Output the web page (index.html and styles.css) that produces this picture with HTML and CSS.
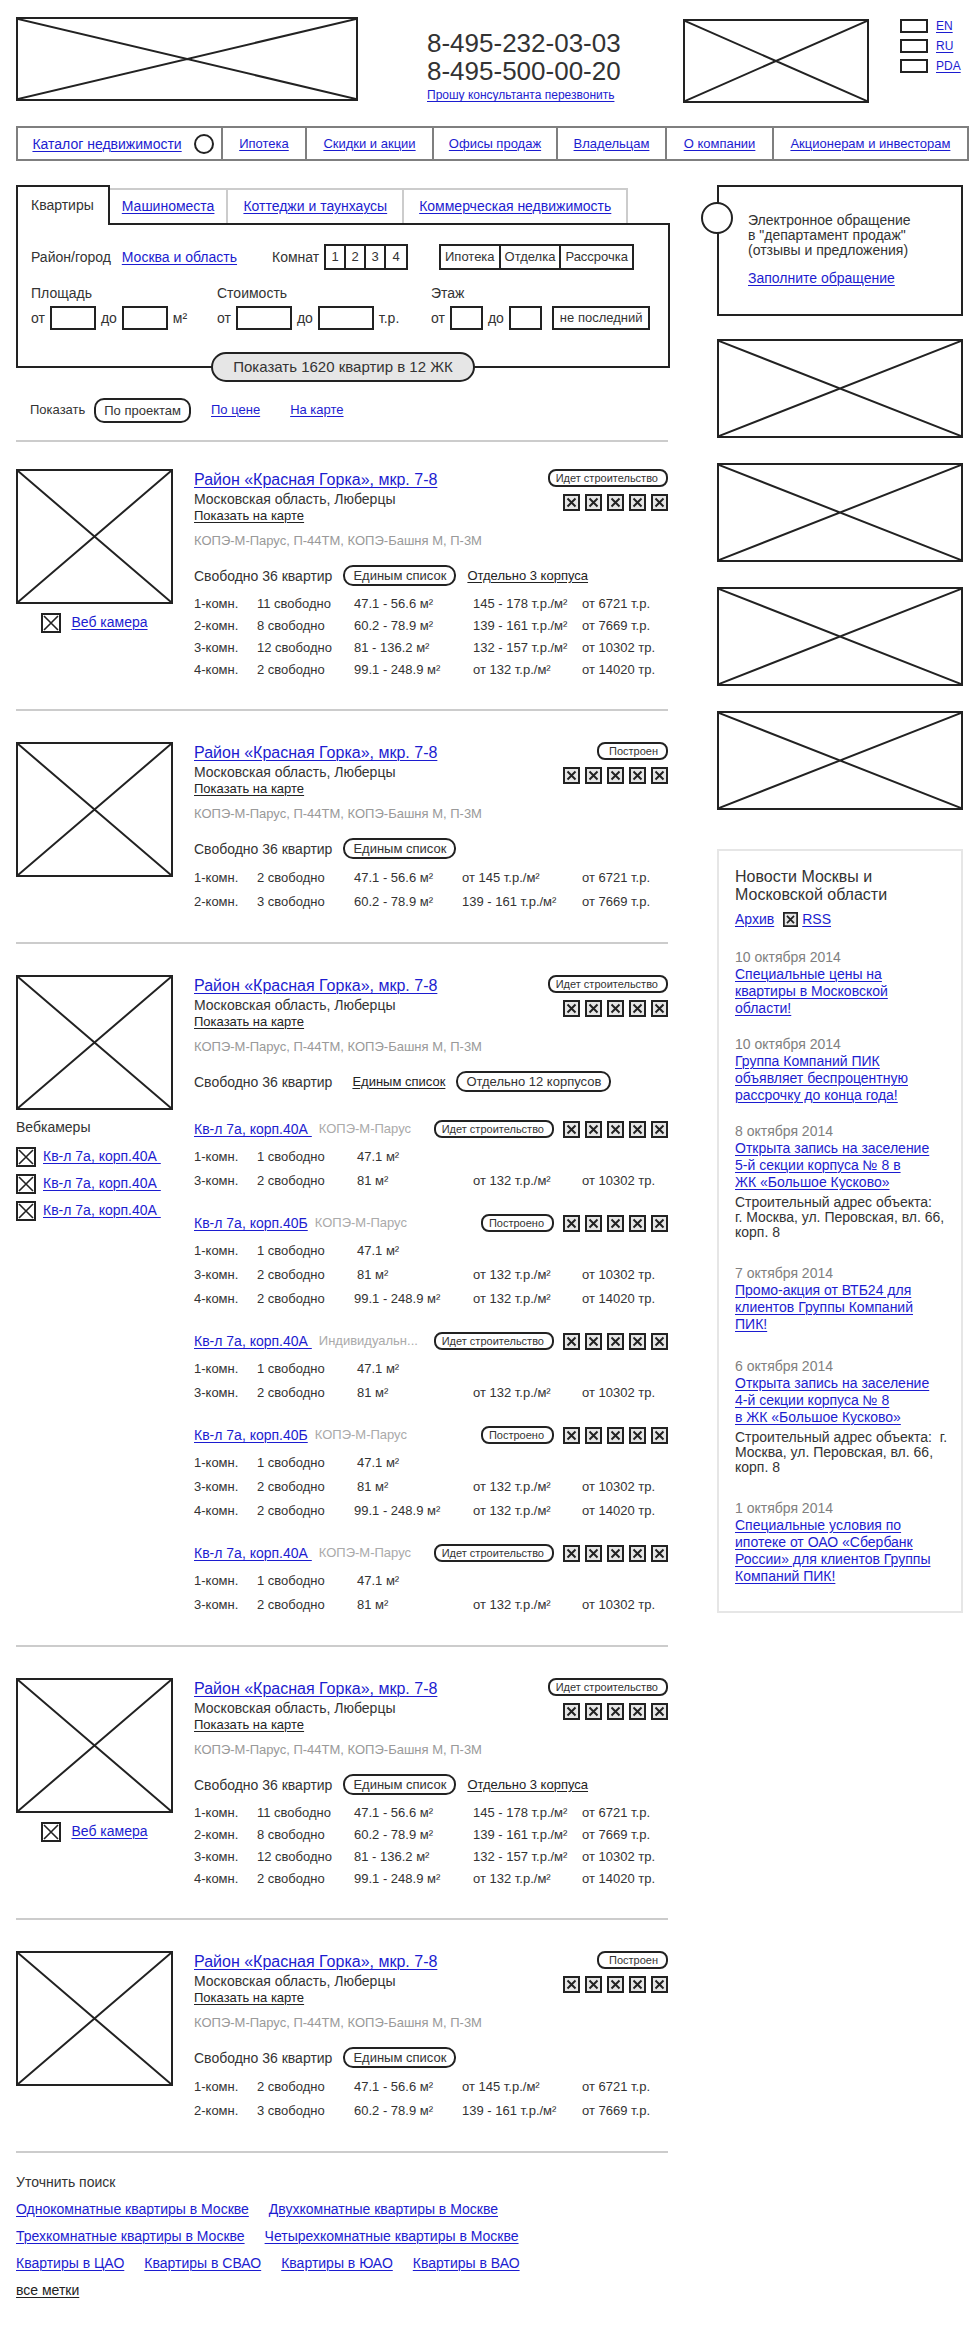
FILE: index.html
```html
<!DOCTYPE html>
<html lang="ru">
<head>
<meta charset="utf-8">
<meta name="viewport" content="width=device-width, initial-scale=1">
<title>Каталог недвижимости</title>
<link rel="stylesheet" href="styles.css">
</head>
<body>
<svg class="defs" aria-hidden="true">
  <symbol id="cross" viewBox="0 0 100 100" preserveAspectRatio="none"><path d="M0 0L100 100M100 0L0 100" vector-effect="non-scaling-stroke"/></symbol>
  <symbol id="mark" viewBox="0 0 17 17"><rect x="1" y="1" width="15" height="15" fill="#e6e6e6"/><path d="M4.500 4.500L12.500 12.500M12.500 4.500L4.500 12.500"/></symbol>
  <symbol id="cam" viewBox="0 0 20 20"><rect x="1" y="1" width="18" height="18" fill="#fff"/><path d="M3 3L17 17M17 3L3 17" stroke-width="1.600"/></symbol>
</svg>

<header class="header">
  <div class="ph ph-logo"><svg><use href="#cross"/></svg></div>
  <div class="phones">
    <div class="phone">8-495-232-03-03</div>
    <div class="phone">8-495-500-00-20</div>
    <a class="callback" href="#">Прошу консультанта перезвонить</a>
  </div>
  <div class="ph ph-promo"><svg><use href="#cross"/></svg></div>
  <ul class="langs">
    <li><span class="flag"></span><a href="#">EN</a></li>
    <li><span class="flag"></span><a href="#">RU</a></li>
    <li><span class="flag"></span><a href="#">PDA</a></li>
  </ul>
</header>

<nav class="nav">
  <div class="nav-item nav-main"><a href="#">Каталог недвижимости</a><span class="dot"></span></div>
  <div class="nav-item"><a href="#">Ипотека</a></div>
  <div class="nav-item"><a href="#">Скидки и акции</a></div>
  <div class="nav-item"><a href="#">Офисы продаж</a></div>
  <div class="nav-item"><a href="#">Владельцам</a></div>
  <div class="nav-item"><a href="#">О компании</a></div>
  <div class="nav-item"><a href="#">Акционерам и инвесторам</a></div>
</nav>

<div class="columns">
<main>
  <div class="tabs">
    <span class="tab tab-active">Квартиры</span>
    <span class="tab"><a href="#">Машиноместа</a></span>
    <span class="tab"><a href="#">Коттеджи и таунхаусы</a></span>
    <span class="tab"><a href="#">Коммерческая недвижимость</a></span>
  </div>
  <form class="search">
    <div class="search-row">
      <span class="region">Район/город <a href="#">Москва и область</a></span>
      <span class="rooms">Комнат
        <span class="group group-rooms"><button type="button">1</button><button type="button">2</button><button type="button">3</button><button type="button">4</button></span>
      </span>
      <span class="group group-options"><button type="button">Ипотека</button><button type="button">Отделка</button><button type="button">Рассрочка</button></span>
    </div>
    <div class="ranges">
      <div>
        <div class="range-title">Площадь</div>
        <div class="range"><label for="a1">от</label><input id="a1" class="w-area" type="text"><label for="a2">до</label><input id="a2" class="w-area" type="text"><span>м²</span></div>
      </div>
      <div>
        <div class="range-title">Стоимость</div>
        <div class="range"><label for="c1">от</label><input id="c1" class="w-cost" type="text"><label for="c2">до</label><input id="c2" class="w-cost" type="text"><span>т.р.</span></div>
      </div>
      <div>
        <div class="range-title">Этаж</div>
        <div class="range"><label for="f1">от</label><input id="f1" class="w-floor" type="text"><label for="f2">до</label><input id="f2" class="w-floor" type="text"><button class="not-last" type="button">не последний</button></div>
      </div>
    </div>
    <button class="submit" type="submit">Показать 1620 квартир в 12 ЖК</button>
  </form>

  <div class="sort"><span>Показать</span><button class="pill" type="button">По проектам</button><a href="#">По цене</a><a href="#">На карте</a></div>

  <article class="listing">
    <div class="side">
      <div class="ph ph-photo"><svg><use href="#cross"/></svg></div>
      <div class="webcam"><svg class="cam"><use href="#cam"/></svg><a href="#">Веб камера</a></div>
    </div>
    <div class="info">
      <div class="top">
        <div>
          <h2><a href="#">Район «Красная Горка», мкр. 7-8</a></h2>
          <div class="address">Московская область, Люберцы</div>
          <a class="map-link" href="#">Показать на карте</a>
        </div>
        <div class="status"><span class="badge">Идет строительство</span>
          <span class="marks"><svg><use href="#mark"/></svg><svg><use href="#mark"/></svg><svg><use href="#mark"/></svg><svg><use href="#mark"/></svg><svg><use href="#mark"/></svg></span></div>
      </div>
      <div class="series">КОПЭ-М-Парус, П-44ТМ, КОПЭ-Башня М, П-3М</div>
      <div class="free"><span>Свободно 36 квартир</span><button class="pill" type="button">Единым список</button><a class="dark" href="#">Отдельно 3 корпуса</a></div>
      <table class="flats">
        <colgroup><col class="c1"><col class="c2"><col class="c3"><col class="c4"><col></colgroup>
        <tr><td>1-комн.</td><td>11 свободно</td><td>47.1 - 56.6 м²</td><td>145 - 178 т.р./м²</td><td>от 6721 т.р.</td></tr>
        <tr><td>2-комн.</td><td>8 свободно</td><td>60.2 - 78.9 м²</td><td>139 - 161 т.р./м²</td><td>от 7669 т.р.</td></tr>
        <tr><td>3-комн.</td><td>12 свободно</td><td>81 - 136.2 м²</td><td>132 - 157 т.р./м²</td><td>от 10302 тр.</td></tr>
        <tr><td>4-комн.</td><td>2 свободно</td><td>99.1 - 248.9 м²</td><td>от 132 т.р./м²</td><td>от 14020 тр.</td></tr>
      </table>
    </div>
  </article>

  <article class="listing">
    <div class="side"><div class="ph ph-photo"><svg><use href="#cross"/></svg></div></div>
    <div class="info">
      <div class="top">
        <div>
          <h2><a href="#">Район «Красная Горка», мкр. 7-8</a></h2>
          <div class="address">Московская область, Люберцы</div>
          <a class="map-link" href="#">Показать на карте</a>
        </div>
        <div class="status"><span class="badge badge-built">Построен</span>
          <span class="marks"><svg><use href="#mark"/></svg><svg><use href="#mark"/></svg><svg><use href="#mark"/></svg><svg><use href="#mark"/></svg><svg><use href="#mark"/></svg></span></div>
      </div>
      <div class="series">КОПЭ-М-Парус, П-44ТМ, КОПЭ-Башня М, П-3М</div>
      <div class="free"><span>Свободно 36 квартир</span><button class="pill" type="button">Единым список</button></div>
      <table class="flats flats-short">
        <colgroup><col class="c1"><col class="c2"><col class="c3"><col class="c4"><col></colgroup>
        <tr><td>1-комн.</td><td>2 свободно</td><td>47.1 - 56.6 м²</td><td>от 145 т.р./м²</td><td>от 6721 т.р.</td></tr>
        <tr><td>2-комн.</td><td>3 свободно</td><td>60.2 - 78.9 м²</td><td>139 - 161 т.р./м²</td><td>от 7669 т.р.</td></tr>
      </table>
    </div>
  </article>

  <article class="listing">
    <div class="side">
      <div class="ph ph-photo"><svg><use href="#cross"/></svg></div>
      <div class="webcams-title">Вебкамеры</div>
      <ul class="webcams">
        <li><svg class="cam"><use href="#cam"/></svg><a href="#">Кв-л 7а, корп.40А&nbsp;</a></li>
        <li><svg class="cam"><use href="#cam"/></svg><a href="#">Кв-л 7а, корп.40А&nbsp;</a></li>
        <li><svg class="cam"><use href="#cam"/></svg><a href="#">Кв-л 7а, корп.40А&nbsp;</a></li>
      </ul>
    </div>
    <div class="info">
      <div class="top">
        <div>
          <h2><a href="#">Район «Красная Горка», мкр. 7-8</a></h2>
          <div class="address">Московская область, Люберцы</div>
          <a class="map-link" href="#">Показать на карте</a>
        </div>
        <div class="status"><span class="badge">Идет строительство</span>
          <span class="marks"><svg><use href="#mark"/></svg><svg><use href="#mark"/></svg><svg><use href="#mark"/></svg><svg><use href="#mark"/></svg><svg><use href="#mark"/></svg></span></div>
      </div>
      <div class="series">КОПЭ-М-Парус, П-44ТМ, КОПЭ-Башня М, П-3М</div>
      <div class="free free-split"><span>Свободно 36 квартир</span><a class="dark" href="#">Единым список</a><button class="pill" type="button">Отдельно 12 корпусов</button></div>

      <section class="building">
        <div class="building-head"><a href="#">Кв-л 7а, корп.40А&nbsp;</a><span class="type">КОПЭ-М-Парус</span><span class="badge">Идет строительство</span>
          <span class="marks"><svg><use href="#mark"/></svg><svg><use href="#mark"/></svg><svg><use href="#mark"/></svg><svg><use href="#mark"/></svg><svg><use href="#mark"/></svg></span></div>
        <table class="flats">
          <colgroup><col class="c1"><col class="c2"><col class="c3"><col class="c4"><col></colgroup>
          <tr><td>1-комн.</td><td>1 свободно</td><td class="single">47.1 м²</td><td></td><td></td></tr>
          <tr><td>3-комн.</td><td>2 свободно</td><td class="single">81 м²</td><td>от 132 т.р./м²</td><td>от 10302 тр.</td></tr>
        </table>
      </section>
      <section class="building">
        <div class="building-head"><a href="#">Кв-л 7а, корп.40Б</a><span class="type">КОПЭ-М-Парус</span><span class="badge">Построено</span>
          <span class="marks"><svg><use href="#mark"/></svg><svg><use href="#mark"/></svg><svg><use href="#mark"/></svg><svg><use href="#mark"/></svg><svg><use href="#mark"/></svg></span></div>
        <table class="flats">
          <colgroup><col class="c1"><col class="c2"><col class="c3"><col class="c4"><col></colgroup>
          <tr><td>1-комн.</td><td>1 свободно</td><td class="single">47.1 м²</td><td></td><td></td></tr>
          <tr><td>3-комн.</td><td>2 свободно</td><td class="single">81 м²</td><td>от 132 т.р./м²</td><td>от 10302 тр.</td></tr>
          <tr><td>4-комн.</td><td>2 свободно</td><td>99.1 - 248.9 м²</td><td>от 132 т.р./м²</td><td>от 14020 тр.</td></tr>
        </table>
      </section>
      <section class="building">
        <div class="building-head"><a href="#">Кв-л 7а, корп.40А&nbsp;</a><span class="type">Индивидуальн...</span><span class="badge">Идет строительство</span>
          <span class="marks"><svg><use href="#mark"/></svg><svg><use href="#mark"/></svg><svg><use href="#mark"/></svg><svg><use href="#mark"/></svg><svg><use href="#mark"/></svg></span></div>
        <table class="flats">
          <colgroup><col class="c1"><col class="c2"><col class="c3"><col class="c4"><col></colgroup>
          <tr><td>1-комн.</td><td>1 свободно</td><td class="single">47.1 м²</td><td></td><td></td></tr>
          <tr><td>3-комн.</td><td>2 свободно</td><td class="single">81 м²</td><td>от 132 т.р./м²</td><td>от 10302 тр.</td></tr>
        </table>
      </section>
      <section class="building">
        <div class="building-head"><a href="#">Кв-л 7а, корп.40Б</a><span class="type">КОПЭ-М-Парус</span><span class="badge">Построено</span>
          <span class="marks"><svg><use href="#mark"/></svg><svg><use href="#mark"/></svg><svg><use href="#mark"/></svg><svg><use href="#mark"/></svg><svg><use href="#mark"/></svg></span></div>
        <table class="flats">
          <colgroup><col class="c1"><col class="c2"><col class="c3"><col class="c4"><col></colgroup>
          <tr><td>1-комн.</td><td>1 свободно</td><td class="single">47.1 м²</td><td></td><td></td></tr>
          <tr><td>3-комн.</td><td>2 свободно</td><td class="single">81 м²</td><td>от 132 т.р./м²</td><td>от 10302 тр.</td></tr>
          <tr><td>4-комн.</td><td>2 свободно</td><td>99.1 - 248.9 м²</td><td>от 132 т.р./м²</td><td>от 14020 тр.</td></tr>
        </table>
      </section>
      <section class="building">
        <div class="building-head"><a href="#">Кв-л 7а, корп.40А&nbsp;</a><span class="type">КОПЭ-М-Парус</span><span class="badge">Идет строительство</span>
          <span class="marks"><svg><use href="#mark"/></svg><svg><use href="#mark"/></svg><svg><use href="#mark"/></svg><svg><use href="#mark"/></svg><svg><use href="#mark"/></svg></span></div>
        <table class="flats">
          <colgroup><col class="c1"><col class="c2"><col class="c3"><col class="c4"><col></colgroup>
          <tr><td>1-комн.</td><td>1 свободно</td><td class="single">47.1 м²</td><td></td><td></td></tr>
          <tr><td>3-комн.</td><td>2 свободно</td><td class="single">81 м²</td><td>от 132 т.р./м²</td><td>от 10302 тр.</td></tr>
        </table>
      </section>
    </div>
  </article>

  <article class="listing">
    <div class="side">
      <div class="ph ph-photo"><svg><use href="#cross"/></svg></div>
      <div class="webcam"><svg class="cam"><use href="#cam"/></svg><a href="#">Веб камера</a></div>
    </div>
    <div class="info">
      <div class="top">
        <div>
          <h2><a href="#">Район «Красная Горка», мкр. 7-8</a></h2>
          <div class="address">Московская область, Люберцы</div>
          <a class="map-link" href="#">Показать на карте</a>
        </div>
        <div class="status"><span class="badge">Идет строительство</span>
          <span class="marks"><svg><use href="#mark"/></svg><svg><use href="#mark"/></svg><svg><use href="#mark"/></svg><svg><use href="#mark"/></svg><svg><use href="#mark"/></svg></span></div>
      </div>
      <div class="series">КОПЭ-М-Парус, П-44ТМ, КОПЭ-Башня М, П-3М</div>
      <div class="free"><span>Свободно 36 квартир</span><button class="pill" type="button">Единым список</button><a class="dark" href="#">Отдельно 3 корпуса</a></div>
      <table class="flats">
        <colgroup><col class="c1"><col class="c2"><col class="c3"><col class="c4"><col></colgroup>
        <tr><td>1-комн.</td><td>11 свободно</td><td>47.1 - 56.6 м²</td><td>145 - 178 т.р./м²</td><td>от 6721 т.р.</td></tr>
        <tr><td>2-комн.</td><td>8 свободно</td><td>60.2 - 78.9 м²</td><td>139 - 161 т.р./м²</td><td>от 7669 т.р.</td></tr>
        <tr><td>3-комн.</td><td>12 свободно</td><td>81 - 136.2 м²</td><td>132 - 157 т.р./м²</td><td>от 10302 тр.</td></tr>
        <tr><td>4-комн.</td><td>2 свободно</td><td>99.1 - 248.9 м²</td><td>от 132 т.р./м²</td><td>от 14020 тр.</td></tr>
      </table>
    </div>
  </article>

  <article class="listing">
    <div class="side"><div class="ph ph-photo"><svg><use href="#cross"/></svg></div></div>
    <div class="info">
      <div class="top">
        <div>
          <h2><a href="#">Район «Красная Горка», мкр. 7-8</a></h2>
          <div class="address">Московская область, Люберцы</div>
          <a class="map-link" href="#">Показать на карте</a>
        </div>
        <div class="status"><span class="badge badge-built">Построен</span>
          <span class="marks"><svg><use href="#mark"/></svg><svg><use href="#mark"/></svg><svg><use href="#mark"/></svg><svg><use href="#mark"/></svg><svg><use href="#mark"/></svg></span></div>
      </div>
      <div class="series">КОПЭ-М-Парус, П-44ТМ, КОПЭ-Башня М, П-3М</div>
      <div class="free"><span>Свободно 36 квартир</span><button class="pill" type="button">Единым список</button></div>
      <table class="flats flats-short">
        <colgroup><col class="c1"><col class="c2"><col class="c3"><col class="c4"><col></colgroup>
        <tr><td>1-комн.</td><td>2 свободно</td><td>47.1 - 56.6 м²</td><td>от 145 т.р./м²</td><td>от 6721 т.р.</td></tr>
        <tr><td>2-комн.</td><td>3 свободно</td><td>60.2 - 78.9 м²</td><td>139 - 161 т.р./м²</td><td>от 7669 т.р.</td></tr>
      </table>
    </div>
  </article>

  <section class="refine">
    <div>Уточнить поиск</div>
    <div class="tags"><a href="#">Однокомнатные квартиры в Москве</a><a href="#">Двухкомнатные квартиры в Москве</a></div>
    <div class="tags"><a href="#">Трехкомнатные квартиры в Москве</a><a href="#">Четырехкомнатные квартиры в Москве</a></div>
    <div class="tags"><a href="#">Квартиры в ЦАО</a><a href="#">Квартиры в СВАО</a><a href="#">Квартиры в ЮАО</a><a href="#">Квартиры в ВАО</a></div>
    <div><a class="dark" href="#">все метки</a></div>
  </section>
</main>

<aside>
  <section class="appeal">
    <span class="appeal-dot"></span>
    <p>Электронное обращение<br>в "департамент продаж"<br>(отзывы и предложения)</p>
    <a href="#">Заполните обращение</a>
  </section>
  <div class="banners">
    <div class="ph"><svg><use href="#cross"/></svg></div>
    <div class="ph"><svg><use href="#cross"/></svg></div>
    <div class="ph"><svg><use href="#cross"/></svg></div>
    <div class="ph"><svg><use href="#cross"/></svg></div>
  </div>
  <section class="news">
    <h3>Новости Москвы и<br>Московской области</h3>
    <div class="feeds"><a href="#">Архив</a><svg><use href="#mark"/></svg><a href="#">RSS</a></div>
    <div class="item">
      <time>10 октября 2014</time>
      <a href="#">Специальные цены на<br>квартиры в Московской<br>области!</a>
    </div>
    <div class="item">
      <time>10 октября 2014</time>
      <a href="#">Группа Компаний ПИК<br>объявляет беспроцентную<br>рассрочку до конца года!</a>
    </div>
    <div class="item item-long">
      <time>8 октября 2014</time>
      <a href="#">Открыта запись на заселение<br>5-й секции корпуса № 8 в<br>ЖК «Большое Кусково»</a>
      <p>Строительный адрес объекта:<br>г. Москва, ул. Перовская, вл. 66,<br>корп. 8</p>
    </div>
    <div class="item item-long">
      <time>7 октября 2014</time>
      <a href="#">Промо-акция от ВТБ24 для<br>клиентов Группы Компаний<br>ПИК!</a>
    </div>
    <div class="item item-long">
      <time>6 октября 2014</time>
      <a href="#">Открыта запись на заселение<br>4-й секции корпуса № 8<br>в ЖК «Большое Кусково»</a>
      <p>Строительный адрес объекта: &nbsp;г.<br>Москва, ул. Перовская, вл. 66,<br>корп. 8</p>
    </div>
    <div class="item">
      <time>1 октября 2014</time>
      <a href="#">Специальные условия по<br>ипотеке от ОАО «Сбербанк<br>России» для клиентов Группы<br>Компаний ПИК!</a>
    </div>
  </section>
</aside>
</div>
</body>
</html>
```

FILE: styles.css
```css
* { box-sizing: border-box; }

body {
  margin: 0;
  padding: 17px 10px 24px 16px;
  background: #fff;
  color: #333;
  font: 14px/18px "Liberation Sans", Arial, sans-serif;
}

a {
  color: #1c1cd0;
  text-decoration: underline;
  text-decoration-thickness: 1px;
  text-underline-offset: 2px;
  white-space: nowrap;
}
a.dark, .map-link { color: #222; }

ul { list-style: none; margin: 0; padding: 0; }
p, h2, h3 { margin: 0; font-weight: normal; }
button, input { margin: 0; padding: 0; font: inherit; color: inherit; background: #fff; border: 2px solid #222; border-radius: 0; }
button { white-space: nowrap; }
.defs { position: absolute; width: 0; height: 0; }
svg { display: block; fill: none; stroke: #222; stroke-width: 2px; }

.ph { border: 2px solid #222; }
.ph svg { width: 100%; height: 100%; }

/* Header */
.header { display: grid; grid-template-columns: 342fr 325fr 186fr 100fr; align-items: start; }
.ph-logo { height: 84px; }
.ph-promo { height: 84px; margin-top: 2px; }
.phones { padding: 12px 0 0 69px; }
.phone { font-size: 26px; line-height: 28px; }
.callback { display: block; font-size: 12px; line-height: 20px; }
.langs { display: grid; gap: 6px; padding: 2px 0 0 31px; }
.langs li { display: flex; align-items: center; gap: 8px; font-size: 12px; line-height: 14px; }
.flag { width: 28px; height: 14px; border: 2px solid #222; }

/* Main navigation */
.nav { display: grid; grid-template-columns: 206fr 84fr 128fr 124fr 110fr 107fr 194fr; margin-top: 21px; height: 35px; border: 2px solid #7f7f7f; }
.nav-item { display: flex; align-items: center; justify-content: center; border-right: 2px solid #7f7f7f; font-size: 13px; }
.nav-item:last-child { border-right: 0; }
.nav-main { gap: 12px; padding-left: 7px; font-size: 14px; }
.dot { width: 20px; height: 20px; border: 2px solid #222; border-radius: 50%; }

.columns { display: grid; grid-template-columns: minmax(0, 1fr) 246px; gap: 47px; align-items: start; padding: 24px 6px 0 0; }

/* Search */
.tabs { display: flex; align-items: flex-end; }
.tab { height: 35px; padding: 0 15px; line-height: 32px; border: 2px solid #ccc; border-width: 2px 2px 0 0; }
.tab-active { position: relative; height: 40px; margin-bottom: -2px; padding: 0 14px 0 13px; line-height: 36px; background: #fff; border: 2px solid #222; border-bottom: 0; }
.tab-active + .tab { padding: 0 12px; }
.search { padding: 18px 13px 0; border: 2px solid #222; }
.search-row { display: flex; align-items: center; height: 27px; }
.region { flex: none; width: 241px; }
.region a { margin-left: 7px; }
.rooms { display: flex; align-items: center; gap: 5px; width: 167px; }
.group { display: flex; border: 2px solid #222; font-size: 13px; }
.group button { height: 22px; border: 0; border-right: 2px solid #222; }
.group button:last-child { border-right: 0; }
.group-rooms button { width: 20px; }
.group-options button { padding: 0 4px; }
.ranges { display: grid; grid-template-columns: 186px 214px auto; margin-top: 14px; }
.range-title { line-height: 18px; }
.range { display: flex; align-items: center; gap: 5px; height: 24px; margin-top: 4px; }
.range input { height: 24px; }
.w-area { width: 46px; }
.w-cost { width: 56px; }
.w-floor { width: 33px; }
.not-last { height: 24px; margin-left: 5px; padding: 0 6px; font-size: 13px; }
.submit { display: block; height: 30px; margin: 22px auto -16px; padding: 0 20px; border-radius: 15px; background: #e6e6e6; font-size: 15px; }

/* Sort row */
.sort { display: flex; align-items: center; height: 26px; margin: 29px 0 17px; padding-left: 14px; font-size: 13px; }
.sort .pill { height: 25px; margin: 0 20px 0 9px; }
.sort a + a { margin-left: 30px; }

.pill { height: 21px; padding: 0 8px; border-radius: 10px; font-size: 13px; line-height: 15px; }

/* Listings */
.listing { display: grid; grid-template-columns: 157px minmax(0, 1fr); gap: 21px; margin-right: 2px; padding: 31px 0 28px; border-top: 2px solid #ccc; }
.sort + .listing { padding-top: 27px; }
.ph-photo { height: 135px; }
.webcam { display: flex; justify-content: center; gap: 10px; margin-top: 9px; }
.cam { width: 20px; height: 20px; }
.webcams-title { margin-top: 8px; }
.webcams { display: grid; gap: 7px; margin-top: 11px; }
.webcams li { display: flex; gap: 7px; }

.top { display: flex; justify-content: space-between; }
.top h2 { font-size: 16px; line-height: 21px; }
.map-link { display: block; font-size: 13px; line-height: 15px; }
.status { display: flex; flex-direction: column; align-items: flex-end; gap: 7px; }
.badge { height: 18px; padding: 0 8px 0 6px; border: 2px solid #222; border-radius: 8px; font-size: 11px; line-height: 14px; white-space: nowrap; }
.badge-built { padding-left: 10px; }
.marks { display: flex; gap: 5px; }
.marks svg { width: 17px; height: 17px; }
.series { margin-top: 10px; color: #999; font-size: 13px; line-height: 16px; }
.free { display: flex; align-items: center; gap: 11px; height: 21px; margin-top: 16px; }
.free .dark { font-size: 13px; }
.free-split > .dark { margin-left: 9px; }

.flats { width: 100%; margin-top: 7px; border-collapse: collapse; table-layout: fixed; font-size: 13px; }
.flats td { height: 22px; padding: 0; line-height: 16px; white-space: nowrap; }
.flats .single { padding-left: 3px; }
.c1 { width: 63px; }
.c2 { width: 97px; }
.c3 { width: 119px; }
.c4 { width: 109px; }
.flats-short td, .building td { height: 24px; }
.flats-short .c3 { width: 108px; }
.flats-short .c4 { width: 120px; }

.building { margin-top: 21px; }
.free + .building { margin-top: 28px; }
.building-head { display: flex; align-items: center; height: 18px; }
.building-head .type { margin-left: 7px; color: #aaa; font-size: 13px; }
.building-head .badge { margin: 0 9px 0 auto; }

/* Refine search */
.refine { display: grid; gap: 9px; margin-right: 2px; padding-top: 20px; border-top: 2px solid #ccc; }
.tags { display: flex; gap: 20px; }

/* Sidebar */
.appeal { position: relative; height: 131px; padding: 26px 0 0 29px; border: 2px solid #222; line-height: 15px; }
.appeal-dot { position: absolute; top: 15px; left: -18px; width: 32px; height: 32px; border: 2px solid #222; border-radius: 50%; background: #fff; }
.appeal p { margin-bottom: 13px; }
.banners { display: grid; gap: 25px; margin-top: 23px; }
.banners .ph { height: 99px; }
.news { margin-top: 39px; padding: 17px 0 26px 16px; border: 2px solid #e6e6e6; line-height: 17px; white-space: nowrap; }
.news h3 { font-size: 16px; line-height: 18px; }
.feeds { display: flex; align-items: center; height: 20px; margin: 5px 0 20px; }
.feeds svg { width: 15px; height: 15px; margin: 0 4px 0 9px; }
.item { margin-bottom: 19px; }
.item-long { margin-bottom: 25px; }
.item:last-child { margin-bottom: 0; }
.item time { display: block; color: #808080; }
.item a { display: block; }
.item p { margin-top: 4px; line-height: 15px; }
```
